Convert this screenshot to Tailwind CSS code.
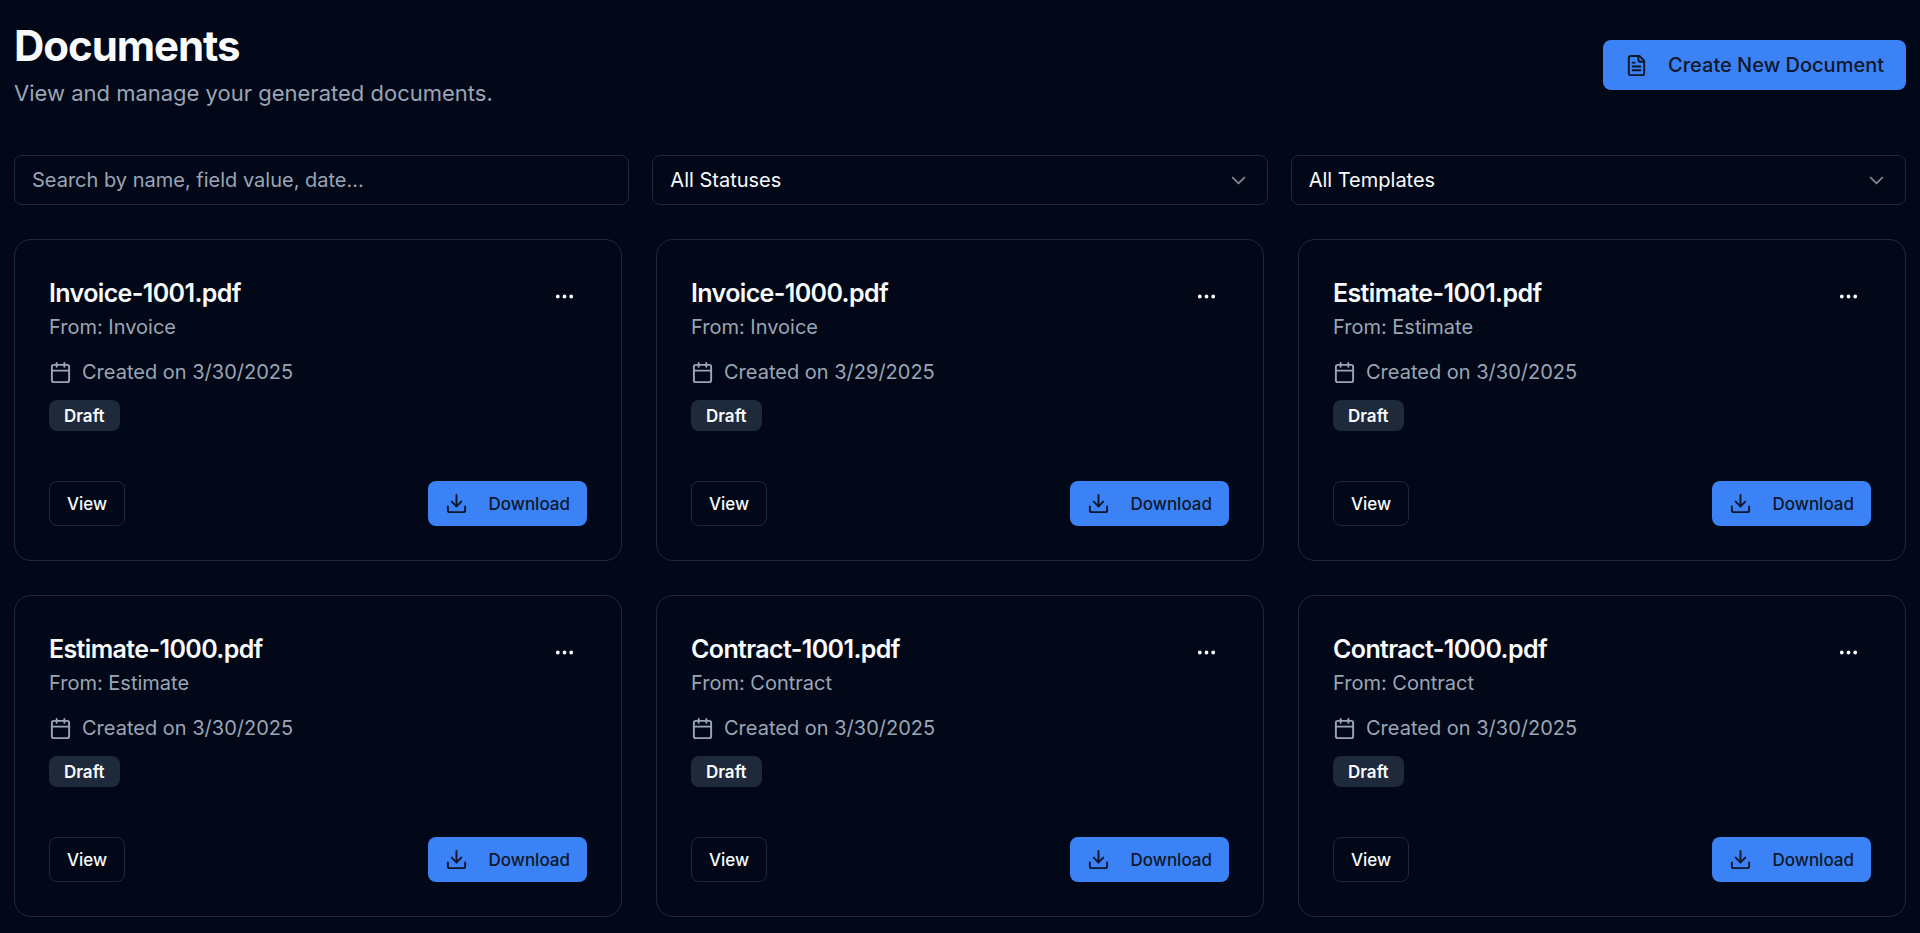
<!DOCTYPE html>
<html lang="en">
  <head>
    <meta charset="utf-8" />
    <meta name="viewport" content="width=device-width, initial-scale=1.0" />
    <title>Documents</title>
    <script src="https://cdn.jsdelivr.net/npm/@tailwindcss/browser@4"></script>
  </head>

  <body
    class="min-h-screen bg-[#020817] px-3.5 pt-5 pb-3.5 font-['Inter',sans-serif] text-[20px] leading-7 text-[#f8fafc]"
  >
    <header class="flex items-center justify-between">
      <div>
        <h1 class="text-[42px] leading-[52px] font-bold tracking-tight">
          Documents
        </h1>
        <p class="mt-1 text-[22px] leading-[34px] text-[#9aa5b5]">
          View and manage your generated documents.
        </p>
      </div>
      <button
        class="flex h-[50px] items-center gap-5 rounded-lg bg-[#3b82f6] px-[22px] font-medium text-[#0f172a]"
      >
        <svg class="size-[23px]" viewBox="0 0 24 24" fill="none" stroke="currentColor" stroke-width="2" stroke-linecap="round" stroke-linejoin="round">
          <path d="M15 2H6a2 2 0 0 0-2 2v16a2 2 0 0 0 2 2h12a2 2 0 0 0 2-2V7Z" />
          <path d="M14 2v4a2 2 0 0 0 2 2h4" />
          <path d="M10 9H8M16 13H8M16 17H8" />
        </svg>
        Create New Document
      </button>
    </header>

    <div class="mt-[45px] grid grid-cols-3 gap-[23px]">
      <input
        type="text"
        aria-label="Search documents"
        placeholder="Search by name, field value, date..."
        class="h-[50px] w-full rounded-lg border border-[#1e293b] bg-transparent px-[17px] placeholder:text-[#9aa5b5]"
      />
      <div class="relative">
        <select
          aria-label="Status"
          class="h-[50px] w-full appearance-none rounded-lg border border-[#1e293b] bg-transparent px-[17px]"
        >
          <option>All Statuses</option>
        </select>
        <svg class="pointer-events-none absolute top-3.5 right-[18px] size-[23px] opacity-50" viewBox="0 0 24 24" fill="none" stroke="currentColor" stroke-width="2" stroke-linecap="round" stroke-linejoin="round">
          <path d="m6 9 6 6 6-6" />
        </svg>
      </div>
      <div class="relative">
        <select
          aria-label="Template"
          class="h-[50px] w-full appearance-none rounded-lg border border-[#1e293b] bg-transparent px-[17px]"
        >
          <option>All Templates</option>
        </select>
        <svg class="pointer-events-none absolute top-3.5 right-[18px] size-[23px] opacity-50" viewBox="0 0 24 24" fill="none" stroke="currentColor" stroke-width="2" stroke-linecap="round" stroke-linejoin="round">
          <path d="m6 9 6 6 6-6" />
        </svg>
      </div>
    </div>

    <main id="documents" class="mt-[34px] grid grid-cols-3 gap-[34px]"></main>

    <template id="card">
      <article class="rounded-[17px] border border-[#1e293b] p-[34px]">
        <div class="flex items-start justify-between">
          <div>
            <h2
              class="text-[25px] leading-[39px] font-semibold tracking-tight"
              data-field="name"
            ></h2>
            <p class="text-[#9aa5b5]">From: <span data-field="template"></span></p>
          </div>
          <button
            aria-label="More actions"
            class="flex size-[45px] items-center justify-center rounded-lg"
          >
            <svg class="size-[23px]" viewBox="0 0 24 24" fill="none" stroke="currentColor" stroke-width="2" stroke-linecap="round" stroke-linejoin="round">
              <circle cx="12" cy="12" r="1" />
              <circle cx="19" cy="12" r="1" />
              <circle cx="5" cy="12" r="1" />
            </svg>
          </button>
        </div>
        <div class="mt-[17px] flex items-center gap-2.5 text-[#9aa5b5]">
          <svg class="size-[23px]" viewBox="0 0 24 24" fill="none" stroke="currentColor" stroke-width="2" stroke-linecap="round" stroke-linejoin="round">
            <path d="M8 2v4M16 2v4" />
            <rect width="18" height="18" x="3" y="4" rx="2" />
            <path d="M3 10h18" />
          </svg>
          <span>Created on <span data-field="date"></span></span>
        </div>
        <div
          class="mt-3.5 flex h-[31px] w-fit items-center rounded-lg bg-[#1e293b] px-[15px] text-[17px] font-semibold"
        >
          Draft
        </div>
        <div class="mt-[50px] flex items-center justify-between text-[17px] font-medium">
          <button class="h-[45px] rounded-lg border border-[#1e293b] px-[17px]">
            View
          </button>
          <button
            class="flex h-[45px] items-center gap-[21px] rounded-lg bg-[#3b82f6] px-[17px] text-[#0f172a]"
          >
            <svg class="size-[23px]" viewBox="0 0 24 24" fill="none" stroke="currentColor" stroke-width="2" stroke-linecap="round" stroke-linejoin="round">
              <path d="M21 15v4a2 2 0 0 1-2 2H5a2 2 0 0 1-2-2v-4" />
              <path d="m7 10 5 5 5-5" />
              <path d="M12 15V3" />
            </svg>
            Download
          </button>
        </div>
      </article>
    </template>

    <script>
      const documents = [
        { name: 'Invoice-1001.pdf', template: 'Invoice', date: '3/30/2025' },
        { name: 'Invoice-1000.pdf', template: 'Invoice', date: '3/29/2025' },
        { name: 'Estimate-1001.pdf', template: 'Estimate', date: '3/30/2025' },
        { name: 'Estimate-1000.pdf', template: 'Estimate', date: '3/30/2025' },
        { name: 'Contract-1001.pdf', template: 'Contract', date: '3/30/2025' },
        { name: 'Contract-1000.pdf', template: 'Contract', date: '3/30/2025' },
      ];

      const list = document.getElementById('documents');
      const card = document.getElementById('card');

      documents.forEach((doc) => {
        const node = card.content.cloneNode(true);
        node.querySelectorAll('[data-field]').forEach((elem) => {
          elem.textContent = doc[elem.dataset.field];
        });
        list.appendChild(node);
      });
    </script>
  </body>
</html>
